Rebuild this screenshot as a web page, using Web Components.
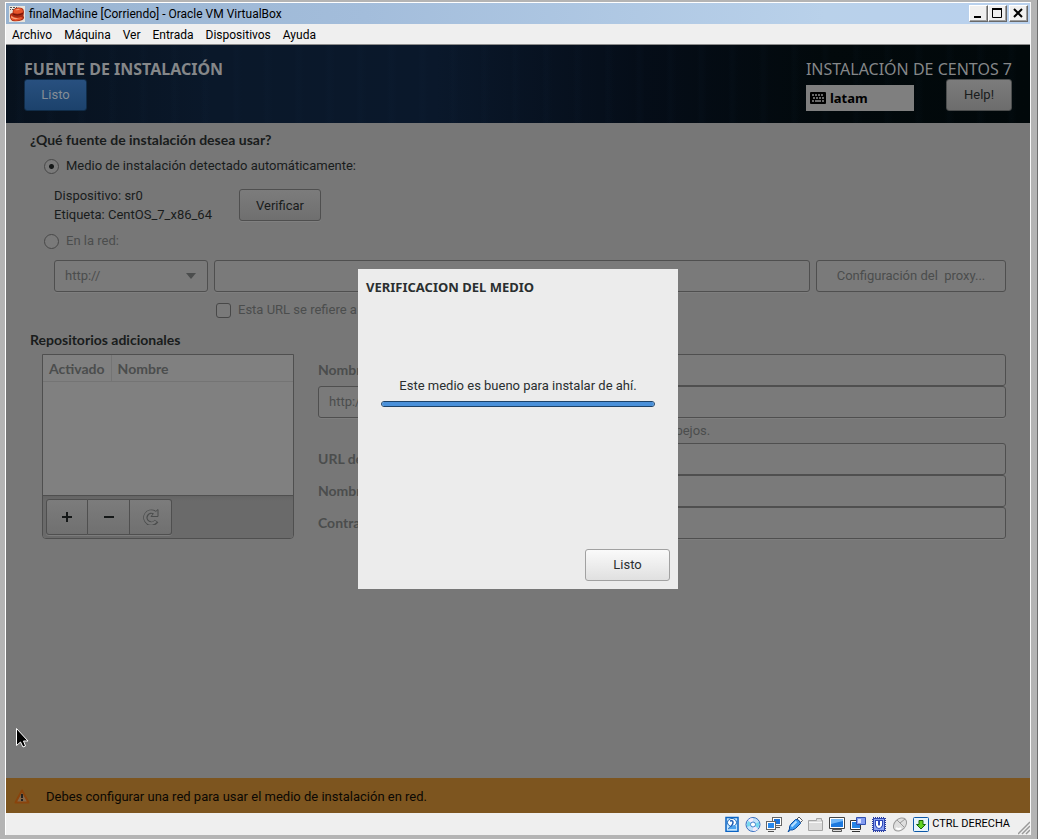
<!DOCTYPE html>
<html lang="es">
<head>
<meta charset="utf-8">
<title>finalMachine [Corriendo] - Oracle VM VirtualBox</title>
<style>
body { margin: 0; background: #b4b4b4; }
</style>
</head>
<body>
<vm-window caption="finalMachine [Corriendo] - Oracle VM VirtualBox">
  <vm-menubar slot="menu"></vm-menubar>
  <guest-screen>
    <spoke-header></spoke-header>
    <source-form></source-form>
    <warning-bar>Debes configurar una red para usar el medio de instalación en red.</warning-bar>
    <media-dialog slot="overlay" heading="VERIFICACION DEL MEDIO">Este medio es bueno para instalar de ahí.</media-dialog>
  </guest-screen>
  <vm-statusbar slot="status"></vm-statusbar>
</vm-window>

<script>
const define = (name, css, html) => customElements.define(name, class extends HTMLElement {
  constructor() {
    super();
    this.attachShadow({ mode: 'open' });
  }
  connectedCallback() {
    const t = document.createElement('template');
    t.innerHTML = '<style>:host,*{box-sizing:border-box}' + css + '</style>' + (typeof html === 'function' ? html(this) : html);
    this.shadowRoot.replaceChildren(t.content.cloneNode(true));
  }
});

/* Look shared by the dimmed GTK controls */
const gtk = `
button, input, select { font: inherit; color: inherit; margin: 0; border-radius: 3px; }
button, .field { height: 32px; border: 1px solid #4f4f4f; padding: 0 10px; }
.field { width: 100%; min-width: 0; background: #7a7a7a; box-shadow: 0 1px #7e7e7e; appearance: none; opacity: 1; }
.field:disabled, button:disabled { color: #4b4d4d; opacity: 1; }
`;

/* ---- VirtualBox window ---- */
define('vm-window', `
:host { display: flex; flex-direction: column; min-height: 100vh; padding: 2px 6px 4px 5px; border-right: 1px solid #6e6e6e; font: 12px/22px Roboto, "Open Sans", sans-serif; color: #000; }
.frame { flex: 1; display: flex; flex-direction: column; background: #efefef; border: solid #fff; border-width: 1px 0 0 1px; border-right: 1px solid #f6f6f6; border-bottom: 0; }
header { height: 21px; display: flex; align-items: center; gap: 4px; padding: 0 2px 0 3px; background: linear-gradient(90deg, #99b4d1, #a3bddb 35%, #b9d1ea 80%, #b9d1ee); }
h1 { flex: 1; margin: 0; font: inherit; }
.buttons { display: flex; }
button { width: 19px; height: 17px; padding: 0; display: grid; place-items: center; background: #f0f0f0; border: 1px solid; border-color: #fff #696969 #696969 #fff; box-shadow: inset -1px -1px #a0a0a0; border-radius: 0; }
button:last-child { margin-left: 2px; }
svg { display: block; }
`, el => `
<div class="frame">
<header>
  <svg width="16" height="16" viewBox="0 0 16 16" aria-hidden="true"><path fill="#e8e4dc" d="M0 0h16v16H0z"/><path stroke="#555" d="M1 1.500h2M4 1.500h2M1 3.500h1M3 3.500h2M7 1.500h1"/><path fill="#a82a12" d="M1 9q0-2 2.500-2L4 4q3-3.500 9-2 2 1 2 4l-.5 4q1.500 2-1 4-5 2-10 1-3-2-2.500-6z"/><path fill="#e8552a" d="M4.500 4q4-3 8-1.500 2 2 1 4-4 2-9 .5zM2 9q4 4 10 2l2 1q-4 4-11 2-2-2-1-5z"/><path fill="#f9a27a" d="M6 4q2.500-1.500 5-.8-2 1.800-5 .8zM2 10q4 3 9 2-5 2.500-9-.5z"/><path fill="#701407" d="M4 7.500q5 2 10-.5v1q-5 2.500-10 .5z"/></svg>
  <h1>${el.getAttribute('caption')}</h1>
  <div class="buttons">
    <button aria-label="Minimizar"><svg width="13" height="13"><path d="M2 9h7v2H2z"/></svg></button>
    <button aria-label="Maximizar"><svg width="13" height="13"><path fill="none" stroke="#000" d="M1.500 2v8.500h9V2"/><path d="M1 1h10v2H1z"/></svg></button>
    <button aria-label="Cerrar"><svg width="13" height="13"><path stroke="#000" stroke-width="2" d="M2 2l8 8M10 2l-8 8"/></svg></button>
  </div>
</header>
<slot name="menu"></slot>
<slot></slot>
<slot name="status"></slot>
</div>`);

define('vm-menubar', `
:host { display: block; height: 21px; border-bottom: 1px solid #8c8c8c; }
nav { display: flex; gap: 12px; padding-left: 6px; }
a { color: #000; text-decoration: none; }
`, `<nav>${['Archivo', 'Máquina', 'Ver', 'Entrada', 'Dispositivos', 'Ayuda'].map(m => `<a href="#">${m}</a>`).join('')}</nav>`);

define('vm-statusbar', `
:host { display: flex; justify-content: flex-end; align-items: center; height: 22px; gap: 3px; font-size: 11px; }
.icons { display: flex; gap: 5px; }
svg { display: block; flex: none; }
.grip { align-self: flex-end; margin-left: 5px; }
`, () => {
  const icons = [
    ['Disco duro', `<rect x="2" y="1.500" width="12" height="14" fill="#c4e6ff" stroke="#0a63c4" stroke-width="1.500"/><ellipse cx="8" cy="6.500" rx="4.500" ry="4" fill="#fff" stroke="#1464b8"/><path fill="none" stroke="#1c5cb4" stroke-width="1.500" d="M6 5q3-1 3 1.500T4.500 13"/><path fill="#4da4ee" d="M5 12l5-3q3 1 2 4H5z"/>`],
    ['CD', `<circle cx="8" cy="8.500" r="7" fill="#c3e3fa" stroke="#386ec0"/><path fill="#f2e9fb" d="M8 8.500L3 4q2-2 5-2zM8 8.500l5 5q-2 1.500-5 1.500z"/><path fill="#75d7ee" d="M8 8.500L14 6q1 3-1 6zM8 8.500L2 11q-.5-3 1-6z"/><circle cx="8" cy="8.500" r="2.500" fill="#fff" stroke="#4683ce"/>`],
    ['Red', `<rect x="6.500" y="1.500" width="9" height="8" fill="#fff" stroke="#666"/><path fill="#1c72d8" d="M8 3h6v5H8z"/><path stroke="#555" d="M9 11.500h5"/><rect x=".5" y="5.500" width="9" height="8" fill="#fff" stroke="#666"/><path fill="#2888ec" d="M2 7h6v5H2z"/><path stroke="#555" d="M2 15.500h6"/>`],
    ['USB', `<path fill="#fff" stroke="#555" d="M10 3l2-2 3.500 3.500-2 2z"/><path fill="#3e9cf2" stroke="#0b4b9c" d="M8.500 3.500q4-.5 5 4l-5 5q-3 2-5 1.500l-2.500 2 1.500-3q-.5-2 1-4.500z"/><path stroke="#b7e0ff" stroke-width="2" d="M9.500 5.500l-5 5"/>`],
    ['Carpetas', `<path fill="#dcdcdc" stroke="#a5a5a5" d="M.5 14.500v-10h8v-2h5v2h1v10z"/><path stroke="#f8f8f8" d="M1 6.500h13"/>`],
    ['Pantalla', `<path fill="#fff" stroke="#444" d="M.5 1.500h15v11H.5z"/><path fill="#1b79df" d="M2 3h12v8H2z"/><path fill="#70b6f7" d="M2 3h12v2L2 8z"/><path fill="#ddd" stroke="#555" d="M3.500 13.500h9v2h-9z"/>`],
    ['Captura', `<path fill="#fff" stroke="#333" d="M.5 4.500h10v9H.5z"/><path fill="#2484e4" d="M2 6h8v6H2z"/><path stroke="#333" d="M2 15.500h8"/><path fill="#849cf0" stroke="#3050b0" d="M6.500 1.500h9v7h-9z"/><path fill="#dbe3ff" d="M8 3h3v4H8z"/>`],
    ['Virtualización', `<rect x="2" y="2" width="12" height="13" fill="none" stroke="#2438a0" stroke-width="2" stroke-dasharray="1 1"/><rect x="2.500" y="2.500" width="11" height="12" fill="#8ba2f2" stroke="#3047ae"/><path fill="none" stroke="#2f48b8" stroke-width="4" d="M6 4v5q2 4 4 0V4"/><path fill="none" stroke="#fff" stroke-width="2" d="M6 5v4q2 4 4 0V5"/>`],
    ['Ratón', `<ellipse cx="8" cy="8.500" rx="5.500" ry="7.500" transform="rotate(45 8 8.500)" fill="#dedede" stroke="#9b9b9b"/><path stroke="#999" fill="none" d="M5 4l7 7M8 7l5-4"/><path stroke="#fff" stroke-width="2" d="M4 12q3 2 5 0"/>`],
    ['Teclado', `<rect x=".5" y="1.500" width="15" height="14" rx="1" fill="#e7f4fb" stroke="#0c58a8"/><path fill="#63d321" stroke="#16680c" d="M6 4.500h4v4h2.500L8 13 3.500 8.500H6z"/>`]
  ];
  return '<div class="icons">' + icons.map(([n, p]) => `<svg role="img" aria-label="${n}" width="16" height="16" viewBox="0 0 16 16">${p}</svg>`).join('') +
    `</div><span>CTRL DERECHA</span><svg class="grip" width="12" height="14" viewBox="0 0 12 14" aria-hidden="true"><path stroke="#999" stroke-width="1.500" d="M0 13L12 1M4 13l8-8M8 13l4-4"/></svg>`;
});

/* ---- Guest display ---- */
define('guest-screen', `
:host { flex: 1; display: flex; flex-direction: column; position: relative; background: #777; font: 13px/18px Roboto, "Noto Sans", sans-serif; color: #191c1c; }
.overlay { position: absolute; inset: 0; display: grid; place-items: center; }
.pointer { position: absolute; left: 9px; bottom: 64px; }
`, `
<slot></slot>
<div class="overlay"><slot name="overlay"></slot></div>
<svg class="pointer" width="15" height="22" viewBox="0 0 15 22" aria-hidden="true"><path fill="#000" stroke="#fff" d="M1.500 1.500v17l4-3.500 2.500 5 2.500-1-2-5h4.500z"/></svg>`);

define('spoke-header', gtk + `
:host { display: flex; justify-content: space-between; height: 78px; padding: 14px 18px 12px; color: #858789;
  background: repeating-linear-gradient(90deg, #1a365400 0 9px, #1a36540c 12px 14px, #1a365400 19px 31px), linear-gradient(90deg, #07111d, #0a182a 20%, #0a182b 42%, #050d18 62%, #02090c 80%, #01080a); }
h1, h2 { margin: 0; font: 16px/20px "Noto Sans", "Open Sans", sans-serif; }
h1 { font-weight: bold; }
.right { display: flex; flex-direction: column; }
.row { display: flex; justify-content: space-between; align-items: flex-end; }
.done { display: block; width: 63px; border-color: #102c48; background: linear-gradient(#28507f, #1c426c); color: #858d96; }
.help { width: 66px; background: linear-gradient(#7c7c7c, #6d6d6d); color: #191c1c; border-color: #4b4d4d; }
.layout { display: flex; align-items: center; gap: 4px; width: 108px; height: 26px; padding: 0 4px; background: #7f7f7f; color: #000; font: bold 13px/18px "Noto Sans", sans-serif; }
`, `
<div>
  <h1>FUENTE DE INSTALACIÓN</h1>
  <button class="done">Listo</button>
</div>
<div class="right">
  <h2>INSTALACIÓN DE CENTOS 7</h2>
  <div class="row">
    <div class="layout"><svg width="16" height="12" viewBox="0 0 16 12" aria-hidden="true"><rect width="16" height="12" rx="1"/><path stroke="#8a8a8a" stroke-width="1.500" d="M2 3h12M3 6h11" stroke-dasharray="2 1"/><path stroke="#8a8a8a" stroke-width="1.500" d="M2 9h2M5 9h6M12 9h2"/></svg>latam</div>
    <button class="help">Help!</button>
  </div>
</div>`);

define('source-form', gtk + `
:host { flex: 1; display: block; padding: 8px 24px; }
h2, .bold { margin: 0; font: bold 14px/18px Lato, "Noto Sans", sans-serif; }
.dim { color: #4b4d4d; }
.option { display: flex; align-items: center; gap: 7px; height: 18px; }
.option input { appearance: none; flex: none; width: 15px; height: 15px; border: 1px solid #484848; background: #7a7a7a; }
.option input[type=radio] { border-radius: 50%; }
.option input[type=radio]:checked { background: radial-gradient(circle, #151818 0 2px, #7a7a7a 3px); }
.source { margin: 8px 0 0 14px; }
.device { display: flex; align-items: center; gap: 12px; margin: 11px 0 0 24px; line-height: 19px; }
.device p { margin: 0; width: 173px; }
.device button { width: 82px; background: linear-gradient(#7c7c7c, #6f6f6f); box-shadow: 0 1px #808080; }
.url { display: grid; grid-template-columns: 154px 1fr 190px; gap: 6px; margin: 10px 0 0 24px; }
.url button { background: #7a7a7a; white-space: pre; }
.list-url { margin: 9px 0 12px 186px; }
.combo { position: relative; display: block; }
.combo svg { position: absolute; right: 12px; top: 13px; }
.repos { display: grid; grid-template-columns: 252px 1fr; gap: 24px; margin: 5px 0 0 12px; }
.list { display: flex; flex-direction: column; border: 1px solid #4f4f4f; border-radius: 0 0 4px 4px; background: #808080; }
table { width: 100%; border-collapse: collapse; }
th { height: 26px; padding: 2px 6px 0; text-align: left; border-bottom: 1px solid #747474; }
th:first-child { width: 68px; border-right: 1px solid #747474; }
.tools { display: flex; margin-top: auto; height: 43px; padding: 3px; border-top: 1px solid #4f4f4f; border-radius: 0 0 3px 3px; background: linear-gradient(#646464, #6a6a6a 5px); }
.tools button { width: 42px; height: 36px; padding: 0; display: grid; place-items: center; border-radius: 0; background: linear-gradient(#7c7c7c, #707070); box-shadow: 0 1px #7c7c7c; }
.tools button + button { border-left: 0; }
.tools button:first-child { border-radius: 3px 0 0 3px; }
.tools button:last-child { border-radius: 0 3px 3px 0; }
.details { display: grid; grid-template-columns: 128px 1fr; grid-template-rows: 32px 32px 25px 32px 32px 32px; align-items: center; white-space: nowrap; }
.mirror { grid-column: 2; padding-left: 2px; }
`, () => {
  const arrow = '<svg width="10" height="6" aria-hidden="true"><path fill="#4b4d4d" d="M0 0h10L5 6z"/></svg>';
  const combo = n => `<span class="combo"><select class="field" disabled aria-label="${n}"><option>http://</option></select>${arrow}</span>`;
  const row = (id, label, type = 'text') => `<label class="bold dim" for="${id}">${label}</label><input class="field" id="${id}" type="${type}" disabled>`;
  return `
<h2>¿Qué fuente de instalación desea usar?</h2>
<label class="option source"><input type="radio" name="src" checked>Medio de instalación detectado automáticamente:</label>
<div class="device"><p>Dispositivo: sr0<br>Etiqueta: CentOS_7_x86_64</p><button>Verificar</button></div>
<label class="option source dim"><input type="radio" name="src">En la red:</label>
<div class="url">${combo('Protocolo')}<input class="field" aria-label="URL" disabled><button disabled>Configuración del  proxy...</button></div>
<label class="option list-url dim"><input type="checkbox" disabled>Esta URL se refiere a una lista de espejos.</label>
<h2>Repositorios adicionales</h2>
<div class="repos">
  <div class="list">
    <table><thead><tr class="bold dim"><th>Activado</th><th>Nombre</th></tr></thead></table>
    <div class="tools">
      <button aria-label="Añadir"><svg width="12" height="12"><path stroke="#151818" stroke-width="2" d="M1 6h10M6 1v10"/></svg></button>
      <button aria-label="Quitar"><svg width="12" height="12"><path stroke="#151818" stroke-width="2" d="M1 6h10"/></svg></button>
      <button aria-label="Recargar" disabled><svg width="16" height="16" viewBox="0 0 16 16"><path fill="none" stroke="#4b4d4d" stroke-width="4.500" d="M13.500 12A6 6 0 1 1 11.500 3.500"/><path fill="#777" stroke="#4b4d4d" d="M15 .5v7H8l3-3.500z"/><path fill="none" stroke="#777" stroke-width="2.500" d="M12.800 12.300A6 6 0 1 1 11.500 3.500L13 5"/></svg></button>
    </div>
  </div>
  <div class="details">
    ${row('name', 'Nombre:')}
    ${combo('Protocolo del repositorio')}<input class="field" aria-label="URL del repositorio" disabled>
    <label class="option mirror dim"><input type="checkbox" disabled>Esta URL se refiere a una lista de espejos.</label>
    ${row('proxy', 'URL del proxy:')}
    ${row('user', 'Nombre de usuario:')}
    ${row('pass', 'Contraseña:', 'password')}
  </div>
</div>`;
});

define('warning-bar', `
:host { display: flex; align-items: center; gap: 16px; height: 35px; padding: 2px 8px 0; background: #7d551f; color: #0b0803; }
svg { display: block; }
`, `<svg width="16" height="16" viewBox="0 0 16 16" aria-hidden="true"><path fill="#85684a" stroke="#8a440c" stroke-width="2" stroke-linejoin="round" d="M8 1.500l6.500 12H1.500z"/><path fill="#222" d="M7 5h2v4H7zM7 10h2v2H7z"/></svg><span><slot></slot></span>`);

define('media-dialog', `
:host { display: block; color: #2a2f30; }
section { display: flex; flex-direction: column; width: 320px; height: 320px; padding: 9px 8px 8px; background: #ececec; }
h2 { margin: 0; font: bold 13px/18px "Noto Sans", sans-serif; }
.body { flex: 1; display: flex; flex-direction: column; align-items: center; gap: 6px; padding: 81px 15px 0; }
progress { appearance: none; display: block; width: 100%; height: 6px; border: 1px solid #1c4268; border-radius: 3px; background: #4a90d9; overflow: hidden; }
progress::-webkit-progress-bar { background: #4a90d9; }
progress::-webkit-progress-value { background: #4a90d9; }
button { align-self: flex-end; width: 85px; height: 32px; font: inherit; color: inherit; border: 1px solid #a1a1a1; border-radius: 3px; background: linear-gradient(#fafafa, #e0e0e0); }
`, el => `
<section role="dialog" aria-labelledby="t">
  <h2 id="t">${el.getAttribute('heading')}</h2>
  <div class="body"><span id="m"><slot></slot></span><progress value="100" max="100" aria-labelledby="m"></progress></div>
  <button>Listo</button>
</section>`);
</script>
</body>
</html>
